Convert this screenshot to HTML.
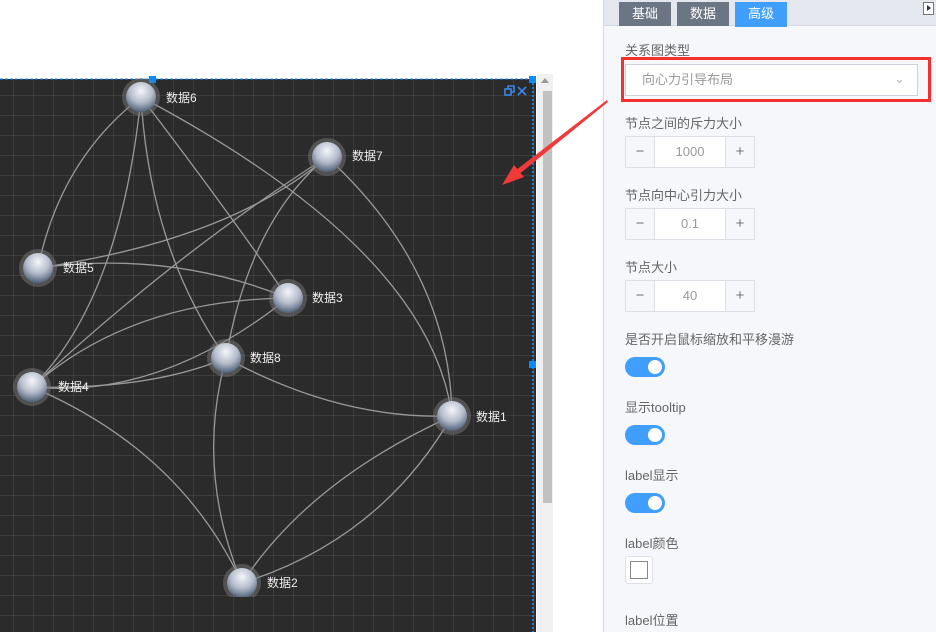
<!DOCTYPE html>
<html><head><meta charset="utf-8"><style>
*{margin:0;padding:0;box-sizing:border-box}
body{width:936px;height:632px;overflow:hidden;background:#fff;position:relative;font-family:"Liberation Sans","Noto Sans CJK SC",sans-serif}
.canvas{position:absolute;left:0;top:79px;width:536px;height:553px;background-color:#2b2b2b;
background-image:linear-gradient(90deg,rgba(255,255,255,.08) 1px,transparent 1px),linear-gradient(rgba(255,255,255,.08) 1px,transparent 1px);
background-size:20px 20px;background-position:13px 16px}
.sb{position:absolute;left:537px;top:74px;width:16px;height:558px;background:#f0f0f0}
.thumb{position:absolute;left:543px;top:91px;width:9px;height:412px;background:#c1c1c1}
.panel{position:absolute;left:603px;top:0;width:333px;height:632px;background:#f5f7fa;border-left:1px solid #d5dae2}
.tabs{height:26px;background:#e4e7ed;border-bottom:1px solid #d5dae2;position:relative}
.tab{position:absolute;top:2px;height:24px;width:52px;background:#6b7584;color:#fff;font-size:13px;text-align:center;line-height:24px}
.lbl{position:absolute;left:21px;font-size:13px;color:#666}
.num{position:absolute;left:21px;width:130px;height:32px;border:1px solid #dcdfe6;background:#fff;font-size:13px;color:#999;display:flex}
.num span{width:28px;background:#f5f7fa;text-align:center;line-height:30px;color:#777;font-size:15px}
.num b{flex:1;text-align:center;line-height:30px;font-weight:normal;border-left:1px solid #dcdfe6;border-right:1px solid #dcdfe6}
.sw{position:absolute;left:21px;width:40px;height:20px;border-radius:10px;background:#409eff}
.sw:after{content:"";position:absolute;right:3px;top:3px;width:14px;height:14px;border-radius:50%;background:#fff}
</style></head><body>
<div class="canvas"></div>
<svg style="position:absolute;left:0;top:0" width="620" height="632">
<defs><radialGradient id="g" cx="50%" cy="30%" r="70%"><stop offset="0" stop-color="#f4f6fa"/><stop offset=".55" stop-color="#b4bccb"/><stop offset="1" stop-color="#4f6078"/></radialGradient></defs>
<line x1="0" y1="79" x2="536" y2="79" stroke="#1e90ff" stroke-dasharray="3,2"/>
<line x1="533" y1="79" x2="533" y2="632" stroke="#1e7fd0" stroke-dasharray="2,2" stroke-width="2"/>
<rect x="149" y="76" width="7" height="7" fill="#0a8cff"/><rect x="529" y="76" width="7" height="7" fill="#0a8cff"/><rect x="529" y="361" width="7" height="7" fill="#0a8cff"/>
<g fill="none" stroke="#999" stroke-width="1.3">
<path d="M141 97 Q60 160 38 268"/><path d="M141 97 Q120 300 32 387"/><path d="M141 97 Q150 250 226 358"/><path d="M141 97 Q220 200 288 298"/><path d="M141 97 Q430 250 452 416"/>
<path d="M327 157 Q230 240 38 268"/><path d="M327 157 Q180 250 32 387"/><path d="M327 157 Q250 220 226 358"/><path d="M327 157 Q450 270 452 416"/>
<path d="M38 268 Q170 250 288 298"/><path d="M32 387 Q130 300 288 298"/><path d="M32 387 Q150 390 226 358"/><path d="M32 387 Q160 400 288 298"/>
<path d="M226 358 Q340 420 452 416"/><path d="M226 358 Q195 470 242 583"/><path d="M32 387 Q180 450 242 583"/><path d="M452 416 Q310 480 242 583"/><path d="M452 416 Q380 540 242 583"/>
</g>
<g>
<circle cx="141" cy="97" r="19" fill="#777" opacity=".5"/><circle cx="141" cy="97" r="15" fill="url(#g)"/>
<circle cx="327" cy="157" r="19" fill="#777" opacity=".5"/><circle cx="327" cy="157" r="15" fill="url(#g)"/>
<circle cx="38" cy="268" r="19" fill="#777" opacity=".5"/><circle cx="38" cy="268" r="15" fill="url(#g)"/>
<circle cx="288" cy="298" r="19" fill="#777" opacity=".5"/><circle cx="288" cy="298" r="15" fill="url(#g)"/>
<circle cx="226" cy="358" r="19" fill="#777" opacity=".5"/><circle cx="226" cy="358" r="15" fill="url(#g)"/>
<circle cx="32" cy="387" r="19" fill="#777" opacity=".5"/><circle cx="32" cy="387" r="15" fill="url(#g)"/>
<circle cx="452" cy="416" r="19" fill="#777" opacity=".5"/><circle cx="452" cy="416" r="15" fill="url(#g)"/>
<clipPath id="c"><rect x="0" y="0" width="600" height="597"/></clipPath>
<g clip-path="url(#c)"><circle cx="242" cy="583" r="19" fill="#777" opacity=".5"/><circle cx="242" cy="583" r="15" fill="url(#g)"/></g>
</g>
<g fill="#eee" font-size="12" font-family="Liberation Sans,Noto Sans CJK SC,sans-serif">
<text x="166" y="102">数据6</text><text x="352" y="160">数据7</text><text x="63" y="272">数据5</text><text x="312" y="302">数据3</text>
<text x="250" y="362">数据8</text><text x="58" y="391">数据4</text><text x="476" y="421">数据1</text><text x="267" y="587">数据2</text>
</g>
<g stroke="#3a86e8" stroke-width="1.6" fill="none"><rect x="505" y="89" width="6" height="6"/><path d="M508 89V86h6v6h-3"/><path d="M518 87l8 8M526 87l-8 8"/></g>
</svg>
<div class="sb"></div><div class="thumb"></div>
<div style="position:absolute;left:541px;top:78px;border:4px solid transparent;border-bottom:5px solid #999;border-top:0"></div>
<div class="panel">
<div class="tabs"><div class="tab" style="left:15px">基础</div><div class="tab" style="left:73px">数据</div><div class="tab" style="left:131px;background:#409eff;height:25px">高级</div>
<div style="position:absolute;right:2px;top:2px;width:11px;height:13px;border:1px solid #777;background:#fff"></div><div style="position:absolute;right:5px;top:5px;border:3px solid transparent;border-left:4px solid #333;border-right:0"></div></div>
<div class="lbl" style="top:40px">关系图类型</div>
<div style="position:absolute;left:17px;top:57px;width:310px;height:45px;border:3px solid #f23030"></div>
<div style="position:absolute;left:21px;top:64px;width:293px;height:32px;background:#fff;border:1px solid #cdd2da;font-size:13px;color:#999;line-height:30px;padding-left:16px">向心力引导布局<span style="position:absolute;right:12px;top:-1px;color:#bbb">&#8964;</span></div>
<div class="lbl" style="top:113px">节点之间的斥力大小</div>
<div class="num" style="top:136px"><span>−</span><b>1000</b><span>+</span></div>
<div class="lbl" style="top:185px">节点向中心引力大小</div>
<div class="num" style="top:208px"><span>−</span><b>0.1</b><span>+</span></div>
<div class="lbl" style="top:257px">节点大小</div>
<div class="num" style="top:280px"><span>−</span><b>40</b><span>+</span></div>
<div class="lbl" style="top:329px">是否开启鼠标缩放和平移漫游</div>
<div class="sw" style="top:357px"></div>
<div class="lbl" style="top:397px">显示tooltip</div>
<div class="sw" style="top:425px"></div>
<div class="lbl" style="top:465px">label显示</div>
<div class="sw" style="top:493px"></div>
<div class="lbl" style="top:533px">label颜色</div>
<div style="position:absolute;left:21px;top:556px;width:28px;height:28px;border:1px solid #dcdfe6;border-radius:3px;background:#fff"><div style="position:absolute;left:4px;top:4px;width:18px;height:18px;border:1px solid #888"></div></div>
<div class="lbl" style="top:610px">label位置</div>
</div>
<svg style="position:absolute;left:0;top:0" width="620" height="632">
<path d="M607 100 L608 102 L520.6 173 L524 177 L502 185 L514 165 L517.4 169 Z" fill="#f03a3a"/>
</svg>
</body></html>
